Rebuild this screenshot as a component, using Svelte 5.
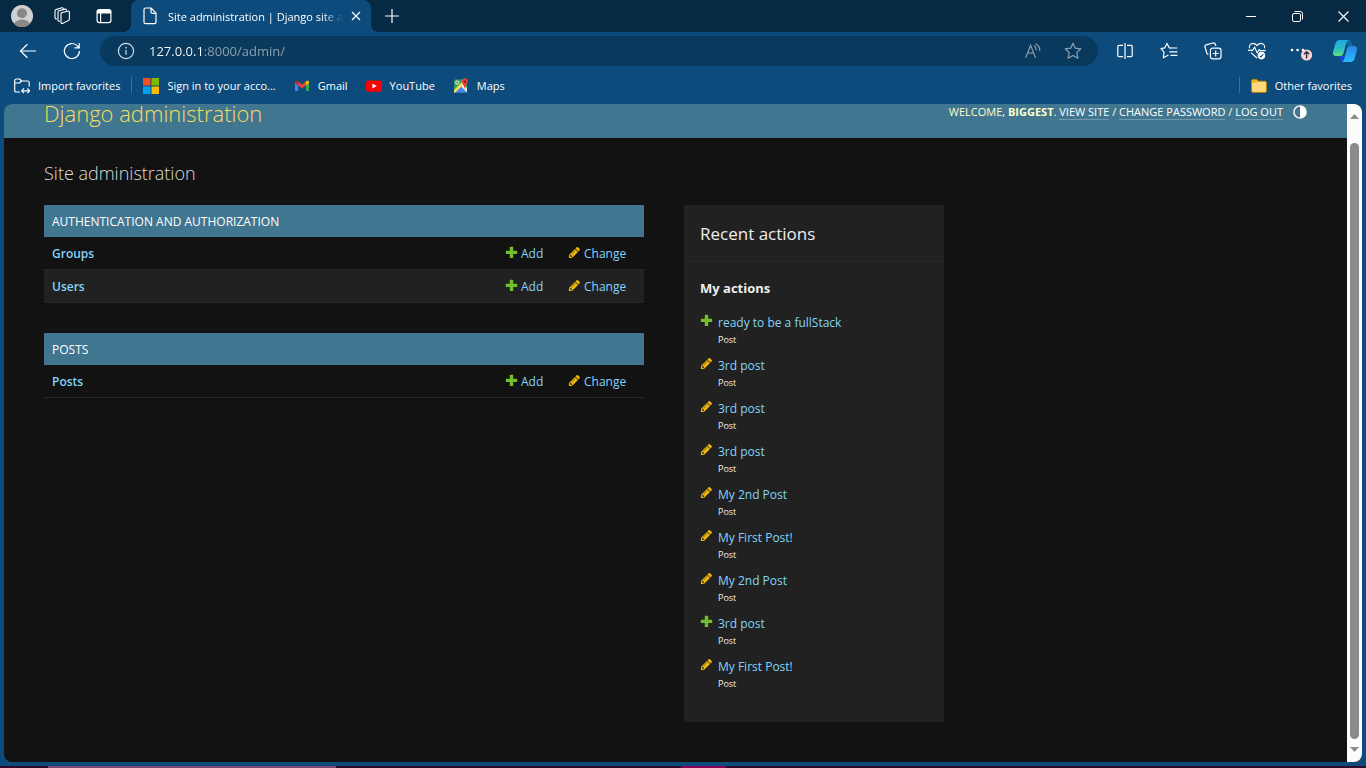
<script>
  const modules = [
    { name: 'Authentication and Authorization', models: ['Groups', 'Users'] },
    { name: 'Posts', models: ['Posts'] }
  ];

  const actions = [
    { kind: 'add', title: 'ready to be a fullStack' },
    { kind: 'change', title: '3rd post' },
    { kind: 'change', title: '3rd post' },
    { kind: 'change', title: '3rd post' },
    { kind: 'change', title: 'My 2nd Post' },
    { kind: 'change', title: 'My First Post!' },
    { kind: 'change', title: 'My 2nd Post' },
    { kind: 'add', title: '3rd post' },
    { kind: 'change', title: 'My First Post!' }
  ];

  let address = $state('127.0.0.1:8000/admin/');
</script>

{#snippet actionIcon(kind)}
  {#if kind === 'add'}
    <svg class="action-icon" viewBox="0 0 13 13" aria-hidden="true">
      <path fill="#70bf2b" d="M5.3 .8h2.4q.5 0 .5.5v3.5h3.5q.5 0 .5.5v2.2q0 .5-.5.5h-3.5v3.5q0 .5-.5.5h-2.4q-.5 0-.5-.5v-3.5h-3.5q-.5 0-.5-.5v-2.2q0-.5.5-.5h3.5v-3.5q0-.5.5-.5z" />
    </svg>
  {:else}
    <svg class="action-icon" viewBox="0 0 1792 1792" aria-hidden="true">
      <path fill="#efb80b" d="M491 1536l91-91-235-235-91 91v107h128v128h107zm523-928q0-22-22-22-10 0-17 7l-542 542q-7 7-7 17 0 22 22 22 10 0 17-7l542-542q7-7 7-17zm-54-192l416 416-832 832H128v-416zm683 96q0 53-37 90l-166 166-416-416 166-165q36-38 90-38 53 0 91 38l235 234q37 39 37 91z" />
    </svg>
  {/if}
{/snippet}

<div class="browser">
  <header class="tabstrip">
    <button class="avatar" aria-label="Profile">
      <svg width="22" height="22" viewBox="0 0 22 22">
        <defs><clipPath id="face"><circle cx="11" cy="11" r="11" /></clipPath></defs>
        <g clip-path="url(#face)">
          <rect width="22" height="22" fill="#d2d0ce" />
          <circle cx="11" cy="8.3" r="5" fill="#8a8886" />
          <ellipse cx="11" cy="20" rx="8.2" ry="5.4" fill="#8a8886" />
        </g>
      </svg>
    </button>
    <button class="strip-btn" aria-label="Workspaces">
      <svg width="18" height="18" viewBox="0 0 18 18" fill="none" stroke="#fff" stroke-width="1.1" stroke-linejoin="round" stroke-linecap="round">
        <path d="M8.2 5.8 L15 4.2 Q16.4 4 16.4 5.4 V12 Q16.4 13 15.4 13.6 L9.5 16.4 Q8 16.8 8 15.2 V7 Q8 6 9 5.7 Z" />
        <path d="M6.8 14.2 Q5 14.6 5 13 V5.2 Q5 4.2 6 3.8 L12 2.1 Q13.4 1.9 13.4 3.2" />
        <path d="M3.8 12 Q2 12.2 2 10.8 V4 Q2 3 3 2.6 L8.8 .8 Q10 .6 10.3 1.6" />
      </svg>
    </button>
    <button class="strip-btn" aria-label="Tab actions">
      <svg width="16" height="16" viewBox="0 0 16 16" fill="none" stroke="#fff" stroke-width="1.2">
        <rect x="1.1" y="1.6" width="13.8" height="13" rx="2" />
        <path d="M1.5 3.2 Q1.5 2 3 2 H13 Q14.5 2 14.5 3.2 V5 H1.5 Z" fill="#fff" />
        <path d="M4.6 5 V14.4" />
      </svg>
    </button>
    <div class="tab">
      <svg width="14" height="18" viewBox="0 0 14 18" fill="none" stroke="#fff" stroke-width="1.2" stroke-linejoin="round">
        <path d="M2.6 1 H8 L13 6.2 V15 Q13 16.6 11.6 16.6 H2.6 Q1 16.6 1 15 V2.6 Q1 1 2.6 1 Z M8 1.2 V5 Q8 6.4 9.4 6.4 H12.8" />
      </svg>
      <span class="tab-title">Site administration | Django site admin</span>
      <button class="tab-close" aria-label="Close tab">
        <svg width="10" height="10" viewBox="0 0 10 10" stroke="#fff" stroke-width="1.2"><path d="M1 1 L9 9 M9 1 L1 9" /></svg>
      </button>
    </div>
    <button class="new-tab" aria-label="New tab">
      <svg width="14" height="14" viewBox="0 0 14 14" stroke="#fff" stroke-width="1.2"><path d="M7 0 V14 M0 7 H14" /></svg>
    </button>
    <div class="window-buttons">
      <button aria-label="Minimize">
        <svg width="10" height="10" viewBox="0 0 10 10" stroke="#fff"><path d="M0 5.5 H10" /></svg>
      </button>
      <button aria-label="Restore">
        <svg width="11" height="11" viewBox="0 0 11 11" fill="none" stroke="#fff">
          <rect x=".5" y="2.5" width="8" height="8" rx="1.4" />
          <path d="M2.6 .5 H8.2 Q10.5 .5 10.5 2.8 V8.4" />
        </svg>
      </button>
      <button aria-label="Close">
        <svg width="11" height="11" viewBox="0 0 11 11" stroke="#fff" stroke-width="1.1"><path d="M.5 .5 L10.5 10.5 M10.5 .5 L.5 10.5" /></svg>
      </button>
    </div>
  </header>

  <div class="toolbar">
    <button class="tool" aria-label="Back">
      <svg width="18" height="16" viewBox="0 0 18 16" fill="none" stroke="#fff" stroke-width="1.2"><path d="M17 8 H1.5 M8.4 1.2 L1.5 8 L8.4 14.8" /></svg>
    </button>
    <button class="tool" aria-label="Refresh">
      <svg width="18" height="18" viewBox="0 0 18 18" fill="none" stroke="#fff" stroke-width="1.2"><path d="M16.4 9 A7.5 7.5 0 1 1 14.4 3.9 L16 5.6 M16.2 1 V5.8 H11.4" /></svg>
    </button>
    <div class="omnibox">
      <svg width="18" height="18" viewBox="0 0 18 18" fill="none" stroke="#d5dde4" stroke-width="1.2">
        <circle cx="9" cy="9" r="7.6" /><path d="M9 8 V12.8" /><path d="M9 5 V6.4" stroke-width="1.4" />
      </svg>
      <input aria-label="Address" bind:value={address} spellcheck="false" />
      <button aria-label="Read aloud">
        <svg width="16" height="16" viewBox="0 0 16 16" fill="none" stroke="#8fa1b0" stroke-width="1.2" stroke-linecap="round">
          <path d="M.8 14.4 L5.6 2.4 L10.4 14.4 M2.6 10 H8.6" />
          <path d="M9.4 2.8 Q11.2 4.4 11.2 7 M11.2 1 Q14.8 3.4 14.8 7.4" />
        </svg>
      </button>
      <button aria-label="Add to favorites">
        <svg width="18" height="18" viewBox="0 0 18 18" fill="none" stroke="#8fa1b0" stroke-width="1.2" stroke-linejoin="round">
          <path d="M9 1.2 L11.3 6.2 L16.8 6.8 L12.8 10.6 L13.9 16.2 L9 13.4 L4.1 16.2 L5.2 10.6 L1.2 6.8 L6.7 6.2 Z" />
        </svg>
      </button>
    </div>
    <button class="tool" aria-label="Split screen">
      <svg width="16" height="16" viewBox="0 0 16 16" fill="none" stroke="#fff" stroke-width="1.2">
        <path d="M6 2.4 H2 Q.8 2.4 .8 3.6 V12.4 Q.8 13.6 2 13.6 H6 M10 2.4 H14 Q15.2 2.4 15.2 3.6 V12.4 Q15.2 13.6 14 13.6 H10 M8 0 V16" />
      </svg>
    </button>
    <button class="tool" aria-label="Favorites">
      <svg width="18" height="18" viewBox="0 0 18 18" fill="none" stroke="#fff" stroke-width="1.2" stroke-linejoin="round">
        <path d="M11.4 6 L9.2 5.8 L7 1.4 L4.8 5.8 L1 6.6 L4 10.2 L3.4 15.8 L8.4 13" />
        <path d="M10.4 6 H17.4 M9.4 9.8 H17.4 M10.4 13.4 H17.4" />
      </svg>
    </button>
    <button class="tool" aria-label="Collections">
      <svg width="18" height="18" viewBox="0 0 18 18" fill="none" stroke="#fff" stroke-width="1.2" stroke-linejoin="round">
        <rect x="6.4" y="6.2" width="10.6" height="10.6" rx="2.2" />
        <path d="M11.7 8.6 V14.4 M8.8 11.5 H14.6" />
        <path d="M4.4 12.4 Q3.2 12.2 2.8 11 L1 5 Q.6 3.4 2.2 2.8 L9 1 Q10.8 .6 11.4 2.2 L11.9 4" />
      </svg>
    </button>
    <button class="tool" aria-label="Browser essentials">
      <svg width="18" height="18" viewBox="0 0 18 18" fill="none" stroke="#fff" stroke-width="1.1" stroke-linejoin="round">
        <path d="M1.4 6.4 Q1 1.6 5 1.4 Q7.4 1.4 9 3.6 Q10.6 1.4 13 1.4 Q17 1.6 16.6 6.4" />
        <path d="M0 8.4 H4.6 L6.6 5 L9.2 11 L11.2 7.4 L12.2 8.6 H17.6 M3 10.6 L9 16" />
        <circle cx="13.4" cy="13.6" r="3.8" fill="#fff" stroke="none" />
        <path d="M11.8 13.8 L13 15 L15.2 12.2" stroke="#0c4b7c" />
      </svg>
    </button>
    <button class="tool" aria-label="Settings and more">
      <svg width="24" height="20" viewBox="0 0 24 20">
        <circle cx="3" cy="9" r="1.3" fill="#fff" /><circle cx="8.6" cy="9" r="1.3" fill="#fff" /><circle cx="14" cy="9" r="1.3" fill="#fff" />
        <circle cx="17.6" cy="14" r="5.6" fill="#ffd0cd" />
        <path d="M17.6 17.6 V11 M15 13.2 L17.6 10.6 L20.2 13.2" fill="none" stroke="#122b44" stroke-width="1.3" />
      </svg>
    </button>
    <button class="tool copilot" aria-label="Copilot">
      <svg width="26" height="24" viewBox="0 0 26 24">
        <defs>
          <linearGradient id="cop-a" x1="0" y1="0" x2="0" y2="1"><stop offset="0" stop-color="#22a5e0" /><stop offset=".5" stop-color="#23bcc9" /><stop offset="1" stop-color="#5fe07c" /></linearGradient>
          <linearGradient id="cop-b" x1="0" y1="0" x2="0" y2="1"><stop offset="0" stop-color="#2a82e8" /><stop offset="1" stop-color="#25c0ff" /></linearGradient>
        </defs>
        <path d="M12 1 H17 Q19 1 19.8 4 L20.6 7 H16 Z" fill="#0d6c9c" />
        <path d="M6 17 H13 L12 23 H10.6 Q8.8 22.6 8 20 Z" fill="#1746dd" />
        <path d="M7.6 1 H16.4 Q14.8 2 14 5 L11.4 14.4 Q10.6 17 8.4 17 H4 Q.2 17 1.2 12.6 L3.2 5 Q4.4 1 7.6 1 Z" fill="url(#cop-a)" />
        <path d="M18.4 23 H9.8 Q11.6 22.6 12.4 19.6 L14.8 10 Q15.6 7 18 7 H22 Q25.8 7 24.9 11.2 L22.8 19 Q21.6 23 18.4 23 Z" fill="url(#cop-b)" />
      </svg>
    </button>
  </div>

  <nav class="favorites" aria-label="Favorites bar">
    <button class="fav">
      <svg width="16" height="16" viewBox="0 0 16 16" fill="none" stroke="#fff" stroke-width="1.2" stroke-linejoin="round">
        <path d="M6 14 H2.4 Q.7 14 .7 12.4 V2.6 Q.7 1 2.4 1 H5.6 L7.6 3 H13.4 Q15.2 3 15.2 4.8 V8.6 M.7 5 H5.4 L7.6 3" />
        <path d="M8 12.8 H15.4 M10 10.4 L7.6 12.8 L10 15.2 M13.4 10.4 L15.6 12.8 L13.4 15.2" />
      </svg>
      Import favorites
    </button>
    <span class="divider"></span>
    <a class="fav" href="#signin">
      <svg width="16" height="16" viewBox="0 0 16 16">
        <rect width="7.5" height="7.5" fill="#f25022" /><rect x="8.5" width="7.5" height="7.5" fill="#7fba00" />
        <rect y="8.5" width="7.5" height="7.5" fill="#00a4ef" /><rect x="8.5" y="8.5" width="7.5" height="7.5" fill="#ffb900" />
      </svg>
      Sign in to your acco...
    </a>
    <a class="fav" href="#gmail">
      <svg width="16" height="16" viewBox="0 0 16 16">
        <path d="M1 4 V13 H4.2 V6.6 Z" fill="#4285f4" /><path d="M15 4 V13 H11.8 V6.6 Z" fill="#34a853" />
        <path d="M4.2 3.4 L8 6.4 L11.8 3.4 V7.4 L8 10.4 L4.2 7.4 Z" fill="#ea4335" />
        <path d="M1 4 Q1 2.2 2.6 2.4 L4.2 3.4 V7.4 L1 5 Z" fill="#c5221f" />
        <path d="M15 4 Q15 2.2 13.4 2.4 L11.8 3.4 V7.4 L15 5 Z" fill="#fbbc04" />
      </svg>
      Gmail
    </a>
    <a class="fav" href="#youtube">
      <svg width="16" height="16" viewBox="0 0 16 16">
        <rect y="2.4" width="16" height="11.4" rx="2.8" fill="#f00" /><path d="M6.4 5.6 L10.8 8.1 L6.4 10.6 Z" fill="#fff" />
      </svg>
      YouTube
    </a>
    <a class="fav" href="#maps">
      <svg width="16" height="16" viewBox="0 0 16 16">
        <rect x="1" y="1.6" width="13" height="13" rx="1" fill="#34a060" />
        <path d="M1 14.6 L7.6 8 L14 14.6 Z" fill="#4285f4" />
        <path d="M1 12 L10 3 L12 5 L2.4 14.6 H1 Z" fill="#fddb4e" />
        <path d="M8 8.4 L10 6.4 L14 10 V14.6 Z" fill="#e6e6e6" />
        <circle cx="4.2" cy="4.6" r="1.6" fill="none" stroke="#fff" stroke-width=".9" />
        <path d="M11.8 11 Q11.4 8 9.6 5.8 Q8 2.6 10 .9 Q11.8 -.3 13.8 .9 Q15.8 2.6 14.2 5.8 Q12.4 8 11.8 11 Z" fill="#ea4335" />
        <circle cx="11.9" cy="3.7" r="1.3" fill="#8c1d15" />
      </svg>
      Maps
    </a>
    <span class="divider last"></span>
    <button class="fav">
      <svg width="16" height="16" viewBox="0 0 16 16">
        <path d="M.6 2.8 Q.6 1.4 2 1.4 H5.6 L7.4 3.2 H14 Q15.4 3.2 15.4 4.6 V13 Q15.4 14.4 14 14.4 H2 Q.6 14.4 .6 13 Z" fill="#ffd97b" stroke="#b8860b" />
        <path d="M1.2 2.8 Q1.2 2 2 2 H5.4 L6.8 3.3 L5.2 4.8 H1.2 Z" fill="#f5b811" />
      </svg>
      Other favorites
    </button>
  </nav>

  <div class="viewport">
    <div class="page">
      <header class="site-header">
        <a class="branding" href="#home">Django administration</a>
        <div class="user-tools">
          <span>Welcome, <strong>Biggest</strong>. <a href="#site">View site</a> / <a href="#password">Change password</a> / <a href="#logout">Log out</a></span>
          <button aria-label="Toggle theme">
            <svg width="14" height="14" viewBox="0 0 14 14"><circle cx="7" cy="7" r="6.1" fill="none" stroke="#fff" stroke-width="1.4" /><path d="M7 1 A6 6 0 0 1 7 13 Z" fill="#fff" /></svg>
          </button>
        </div>
      </header>

      <main>
        <h1>Site administration</h1>
        <div class="dashboard">
          <div class="modules">
            {#each modules as module}
              <table>
                <caption>{module.name}</caption>
                <tbody>
                  {#each module.models as model}
                    <tr>
                      <th scope="row"><a href="#{model}">{model}</a></th>
                      <td class="add"><a href="#add-{model}">{@render actionIcon('add')}Add</a></td>
                      <td class="change"><a href="#change-{model}">{@render actionIcon('change')}Change</a></td>
                    </tr>
                  {/each}
                </tbody>
              </table>
            {/each}
          </div>

          <aside>
            <h2>Recent actions</h2>
            <h3>My actions</h3>
            <ul>
              {#each actions as action}
                <li>
                  {@render actionIcon(action.kind)}
                  <div>
                    <a href="#entry">{action.title}</a>
                    <span>Post</span>
                  </div>
                </li>
              {/each}
            </ul>
          </aside>
        </div>
      </main>
    </div>
    <div class="scrollbar" aria-hidden="true">
      <svg width="9" height="5" viewBox="0 0 9 5"><path d="M4.5 0 L9 5 H0 Z" fill="#8b8b8b" /></svg>
      <span class="thumb"></span>
      <svg width="9" height="5" viewBox="0 0 9 5"><path d="M4.5 5 L9 0 H0 Z" fill="#8b8b8b" /></svg>
    </div>
  </div>
  <div class="taskbar-edge"><span class="search-edge"></span><span class="app-edge"></span></div>
</div>

<style>
  :global(body) {
    margin: 0;
    background: #0c4b7c;
  }

  .browser {
    min-height: 100vh;
    display: flex;
    flex-direction: column;
    background: #0c4b7c;
    color: #fff;
    font-family: 'Open Sans', 'Noto Sans', sans-serif;
    font-size: 11px;
  }

  button {
    display: flex;
    align-items: center;
    justify-content: center;
    padding: 0;
    border: 0;
    background: none;
    color: inherit;
    font: inherit;
  }

  a {
    color: inherit;
    text-decoration: none;
  }

  svg {
    display: block;
    flex: none;
  }

  .tabstrip {
    display: flex;
    align-items: center;
    height: 32px;
    padding-left: 11px;
    background: #072a44;
  }

  .avatar {
    width: 22px;
    margin-right: 8px;
  }

  .strip-btn {
    width: 42px;
    height: 32px;
  }

  .tab {
    position: relative;
    display: flex;
    align-items: center;
    gap: 11px;
    width: 240px;
    height: 32px;
    margin-left: 6px;
    padding: 0 5px 0 12px;
    box-sizing: border-box;
    border-radius: 8px 8px 0 0;
    background: #0c4b7c;
  }

  .tab::before,
  .tab::after {
    content: '';
    position: absolute;
    bottom: 0;
    width: 8px;
    height: 8px;
  }

  .tab::before {
    left: -8px;
    background: radial-gradient(circle at 0 0, transparent 8px, #0c4b7c 8px);
  }

  .tab::after {
    right: -8px;
    background: radial-gradient(circle at 100% 0, transparent 8px, #0c4b7c 8px);
  }

  .tab-title {
    flex: 1;
    overflow: hidden;
    white-space: nowrap;
    mask-image: linear-gradient(90deg, #000 88%, transparent);
  }

  .tab-close {
    width: 20px;
    height: 20px;
    margin-left: -8px;
  }

  .new-tab {
    width: 42px;
    height: 32px;
  }

  .window-buttons {
    display: flex;
    margin-left: auto;
  }

  .window-buttons button {
    width: 46px;
    height: 32px;
  }

  .toolbar {
    display: flex;
    align-items: center;
    height: 38px;
    padding-left: 6px;
  }

  .tool {
    width: 44px;
    height: 32px;
  }

  .copilot {
    width: 43px;
  }

  .omnibox {
    flex: 1;
    display: flex;
    align-items: center;
    height: 30px;
    margin: 0 5px 0 6px;
    padding: 0 5px 0 17px;
    border-radius: 15px;
    background: #093a5e;
  }

  .omnibox input {
    flex: 1;
    min-width: 0;
    margin-left: 14px;
    padding: 0;
    border: 0;
    outline: 0;
    background: linear-gradient(90deg, #fff 54px, #93a3b1 54px);
    background-clip: text;
    color: transparent;
    font: inherit;
    font-size: 13px;
    line-height: 20px;
  }

  .omnibox button {
    width: 40px;
    height: 30px;
  }

  .favorites {
    display: flex;
    align-items: center;
    gap: 18px;
    height: 34px;
    padding: 0 14px 4px;
    box-sizing: border-box;
  }

  .fav {
    display: flex;
    align-items: center;
    gap: 8px;
    white-space: nowrap;
  }

  .fav svg {
    margin-top: 1px;
  }

  .divider {
    width: 1px;
    height: 16px;
    margin: 0 -7px;
    background: #3c6f96;
  }

  .divider.last {
    margin-left: auto;
  }

  .viewport {
    flex: 1;
    display: flex;
    margin: 0 4px 4px;
    border-radius: 8px;
    background: #121212;
  }

  .page {
    flex: 1;
    min-width: 0;
  }

  .site-header {
    display: flex;
    align-items: flex-start;
    justify-content: space-between;
    height: 34px;
    padding: 0 40px;
    border-top-left-radius: 8px;
    background: #417690;
  }

  .branding {
    color: #f5dd5d;
    font-size: 22px;
    font-weight: 300;
    line-height: 18px;
  }

  .user-tools {
    display: flex;
    align-items: center;
    gap: 10px;
    color: #ffc;
    line-height: 16px;
    text-transform: uppercase;
  }

  .user-tools a {
    border-bottom: 1px solid rgba(255, 255, 255, 0.25);
    color: #fff;
  }

  main {
    padding: 22px 40px 40px;
    color: #eee;
    font-size: 12px;
  }

  h1 {
    margin: 0 0 19px;
    color: #ddd;
    font-size: 18px;
    font-weight: 300;
    line-height: 26px;
  }

  .dashboard {
    display: flex;
    align-items: flex-start;
    gap: 40px;
  }

  .modules {
    flex: 0 1 600px;
    display: grid;
    gap: 30px;
  }

  table {
    width: 100%;
    border-collapse: separate;
    border-spacing: 0;
  }

  caption {
    padding: 9px 8px 7px;
    background: #417690;
    color: #fff;
    line-height: 16px;
    text-align: left;
    text-transform: uppercase;
  }

  th,
  td {
    padding: 9px 8px 7px;
    border-bottom: 1px solid #272727;
    line-height: 16px;
    text-align: left;
  }

  tr:nth-child(even) {
    background: #212121;
  }

  th {
    font-weight: 600;
  }

  th a,
  td a,
  li a {
    color: #81d4fa;
  }

  td a {
    display: flex;
    align-items: flex-start;
    gap: 3px;
  }

  .add {
    width: 47px;
  }

  .change {
    width: 68px;
  }

  .action-icon {
    width: 13px;
    height: 13px;
  }

  aside {
    flex: 0 1 260px;
    padding-bottom: 29px;
    background: #212121;
  }

  h2 {
    margin: 0 0 16px;
    padding: 17px 16px 15px;
    border-bottom: 1px solid #272727;
    font-size: 17px;
    font-weight: 400;
    line-height: 24px;
  }

  h3 {
    margin: 0 16px 16px;
    font-size: 13px;
    font-weight: 700;
    line-height: 20px;
  }

  ul {
    display: grid;
    gap: 8px;
    margin: 0;
    padding: 0 16px;
    list-style: none;
  }

  li {
    display: flex;
    gap: 5px;
    line-height: 17px;
  }

  li div {
    display: grid;
  }

  li span {
    font-size: 9px;
    line-height: 18px;
  }

  .scrollbar {
    display: flex;
    flex-direction: column;
    align-items: center;
    gap: 24px;
    width: 15px;
    padding: 10px 0;
    box-sizing: border-box;
    border-radius: 0 8px 8px 0;
    background: #fcfcfc;
  }

  .thumb {
    flex: 1;
    width: 9px;
    margin-bottom: -16px;
    border-radius: 5px;
    background: #8b8b8b;
  }

  .taskbar-edge {
    display: flex;
    height: 2px;
    padding-left: 48px;
    background: #2f0b2b;
  }

  .search-edge {
    width: 288px;
    margin-right: 345px;
    background: #7b4a74;
  }

  .app-edge {
    width: 45px;
    background: #880058;
  }
</style>
